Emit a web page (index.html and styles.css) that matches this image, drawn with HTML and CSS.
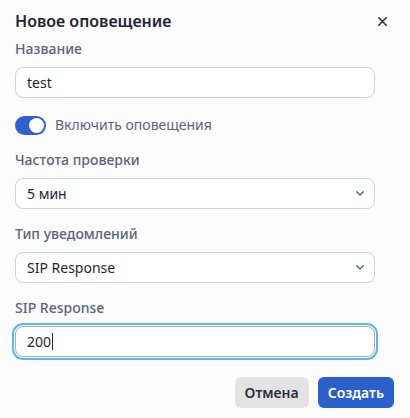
FILE: index.html
```html
<!DOCTYPE html>
<html lang="ru">
<head>
<meta charset="utf-8">
<link rel="stylesheet" href="styles.css">
</head>
<body>
<div class="modal">
  <div class="header">
    <h1 class="title">Новое оповещение</h1>
    <button class="close" aria-label="Закрыть">
      <svg width="9" height="9" viewBox="0 0 9 9"><path d="M0.8 0.8L8.2 8.2M8.2 0.8L0.8 8.2" stroke="#2d3446" stroke-width="1.6" stroke-linecap="round"/></svg>
    </button>
  </div>
  <div class="fields">
    <div class="field">
      <label class="label">Название</label>
      <div class="input">test</div>
    </div>
    <div class="switch-row">
      <span class="switch"><span class="knob"></span></span>
      <span class="switch-label">Включить оповещения</span>
    </div>
    <div class="field">
      <label class="label">Частота проверки</label>
      <div class="input select">5 мин
        <svg class="chev" width="8" height="5" viewBox="0 0 8 5"><path d="M0.8 0.8L4 4L7.2 0.8" fill="none" stroke="#5b6478" stroke-width="1.4" stroke-linecap="round" stroke-linejoin="round"/></svg>
      </div>
    </div>
    <div class="field">
      <label class="label">Тип уведомлений</label>
      <div class="input select">SIP Response
        <svg class="chev" width="8" height="5" viewBox="0 0 8 5"><path d="M0.8 0.8L4 4L7.2 0.8" fill="none" stroke="#5b6478" stroke-width="1.4" stroke-linecap="round" stroke-linejoin="round"/></svg>
      </div>
    </div>
    <div class="field">
      <label class="label">SIP Response</label>
      <div class="input focused">200<span class="caret"></span></div>
    </div>
  </div>
  <div class="footer">
    <button class="btn btn-gray">Отмена</button>
    <button class="btn btn-blue">Создать</button>
  </div>
</div>
</body>
</html>
```
FILE: styles.css
```css
html, body {
  margin: 0;
  padding: 0;
  background: #fcfcfd;
}
body {
  font-family: "Noto Sans", sans-serif;
  color: #1a202c;
}
.modal {
  padding: 9px 16px 0 15px;
  display: flex;
  flex-direction: column;
}
.header {
  display: flex;
  justify-content: space-between;
  align-items: center;
  height: 24px;
}
.title {
  margin: 0;
  font-size: 16px;
  font-weight: 600;
  line-height: 24px;
  color: #1f2430;
}
.close {
  border: 0;
  background: none;
  padding: 0;
  margin-right: 7px;
  width: 9px;
  height: 9px;
  display: flex;
  align-items: center;
  justify-content: center;
}
.close svg {
  display: block;
}
.fields {
  width: 360px;
  display: flex;
  flex-direction: column;
  margin-top: 6px;
}
.field {
  display: flex;
  flex-direction: column;
  gap: 8px;
}
.label {
  display: block;
  font-size: 14px;
  font-weight: 500;
  line-height: 20px;
  height: 20px;
  color: #5b6478;
}
.input {
  box-sizing: border-box;
  height: 31px;
  border: 1px solid #cdd3dc;
  border-radius: 8px;
  padding: 0 11px;
  display: flex;
  align-items: center;
  font-size: 14px;
  color: #1f2430;
  background: #fff;
}
.select {
  justify-content: space-between;
  padding-right: 10px;
}
.chev {
  display: block;
}
.switch-row {
  display: flex;
  align-items: center;
  gap: 9px;
  margin: 17px 0 15px 0;
}
.switch {
  box-sizing: border-box;
  width: 31px;
  height: 19px;
  border-radius: 10px;
  background: #2d62d1;
  padding: 2px;
  display: flex;
  justify-content: flex-end;
}
.knob {
  width: 15px;
  height: 15px;
  border-radius: 50%;
  background: #fff;
}
.switch-label {
  font-size: 14px;
  color: #5b6478;
  line-height: 20px;
}
.field + .field {
  margin-top: 15px;
}
.focused {
  border-color: #a7afbb;
  outline: 2px solid #5cb8ea;
  outline-offset: 1px;
}
.caret {
  display: inline-block;
  width: 1px;
  height: 17px;
  background: #1f2430;
  margin-left: 1px;
}
.footer {
  display: flex;
  justify-content: flex-end;
  gap: 9px;
  margin-top: 20px;
}
.btn {
  height: 31px;
  border: 0;
  border-radius: 6px;
  font-family: "Noto Sans", sans-serif;
  font-size: 14px;
  font-weight: 600;
  padding: 0 10px;
}
.btn-gray {
  background: #e3e3e3;
  color: #2a2f3a;
}
.btn-blue {
  background: #2b5fcb;
  color: #fff;
}
```
